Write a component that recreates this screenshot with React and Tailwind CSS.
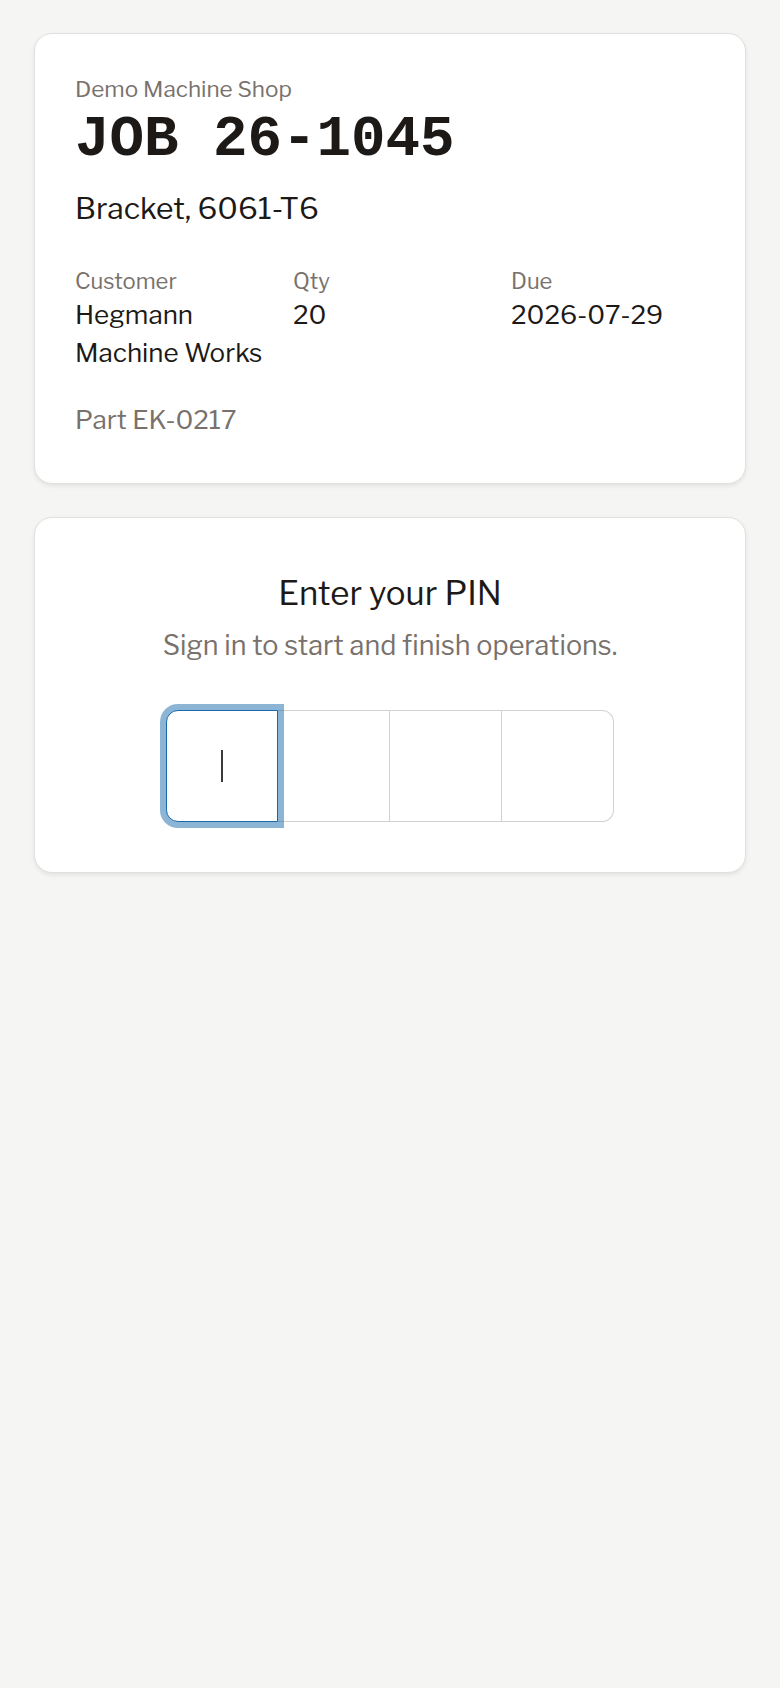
import React from 'react';

const PIN_LENGTH = 4;

function PinBoxes() {
  return (
    <div className="flex justify-center">
      {Array.from({ length: PIN_LENGTH }).map((_, i) => {
        const first = i === 0;
        const last = i === PIN_LENGTH - 1;
        return (
          <div
            key={i}
            className={`w-[112px] h-[112px] flex items-center justify-center bg-white ${
              first
                ? 'relative z-10 border border-[#1769ab] rounded-l-[12px] shadow-[0_0_0_6px_rgba(23,105,171,0.5)]'
                : 'border-y border-r border-[#d3d0cd]'
            } ${last ? 'rounded-r-[12px]' : ''}`}
          >
            {first && <span className="w-[2px] h-[32px] bg-[#3a3a3a]"></span>}
          </div>
        );
      })}
    </div>
  );
}

export default function App() {
  return (
    <div className="min-h-screen bg-[#f5f5f4] px-[34px] pt-[33px] pb-10 text-[#1c1917] font-['Libre_Franklin',sans-serif]">
      {/* JOB CARD */}
      <div className="bg-white border border-[#e2e0de] rounded-[18px] shadow-[0_2px_4px_rgba(0,0,0,0.08)] px-10 pt-10 pb-[45px]">
        <p className="text-[22.5px] leading-[30px] text-[#78716c]">Demo Machine Shop</p>
        <h1 className="text-[57.5px] leading-[72px] font-bold font-['Liberation_Mono',monospace]">JOB 26-1045</h1>
        <p className="mt-3 text-[30px] leading-[40px]">Bracket, 6061-T6</p>

        <div className="mt-[38px] grid grid-cols-3 gap-x-6">
          <div>
            <p className="text-[22px] leading-[30px] text-[#78716c]">Customer</p>
            <p className="text-[26px] leading-[38px]">Hegmann Machine Works</p>
          </div>
          <div>
            <p className="text-[22px] leading-[30px] text-[#78716c]">Qty</p>
            <p className="text-[26px] leading-[38px]">20</p>
          </div>
          <div>
            <p className="text-[22px] leading-[30px] text-[#78716c]">Due</p>
            <p className="text-[26px] leading-[38px]">2026-07-29</p>
          </div>
        </div>

        <p className="mt-[29px] text-[26px] leading-[37px] text-[#78716c]">Part EK-0217</p>
      </div>

      {/* PIN CARD */}
      <div className="mt-[33px] bg-white border border-[#e2e0de] rounded-[18px] shadow-[0_2px_4px_rgba(0,0,0,0.08)] px-10 pt-[55px] pb-[50px] text-center">
        <h2 className="text-[33px] leading-[40px]">Enter your PIN</h2>
        <p className="mt-[15px] text-[27px] leading-[36px] text-[#78716c]">Sign in to start and finish operations.</p>
        <div className="mt-[46px]">
          <PinBoxes />
        </div>
      </div>
    </div>
  );
}
